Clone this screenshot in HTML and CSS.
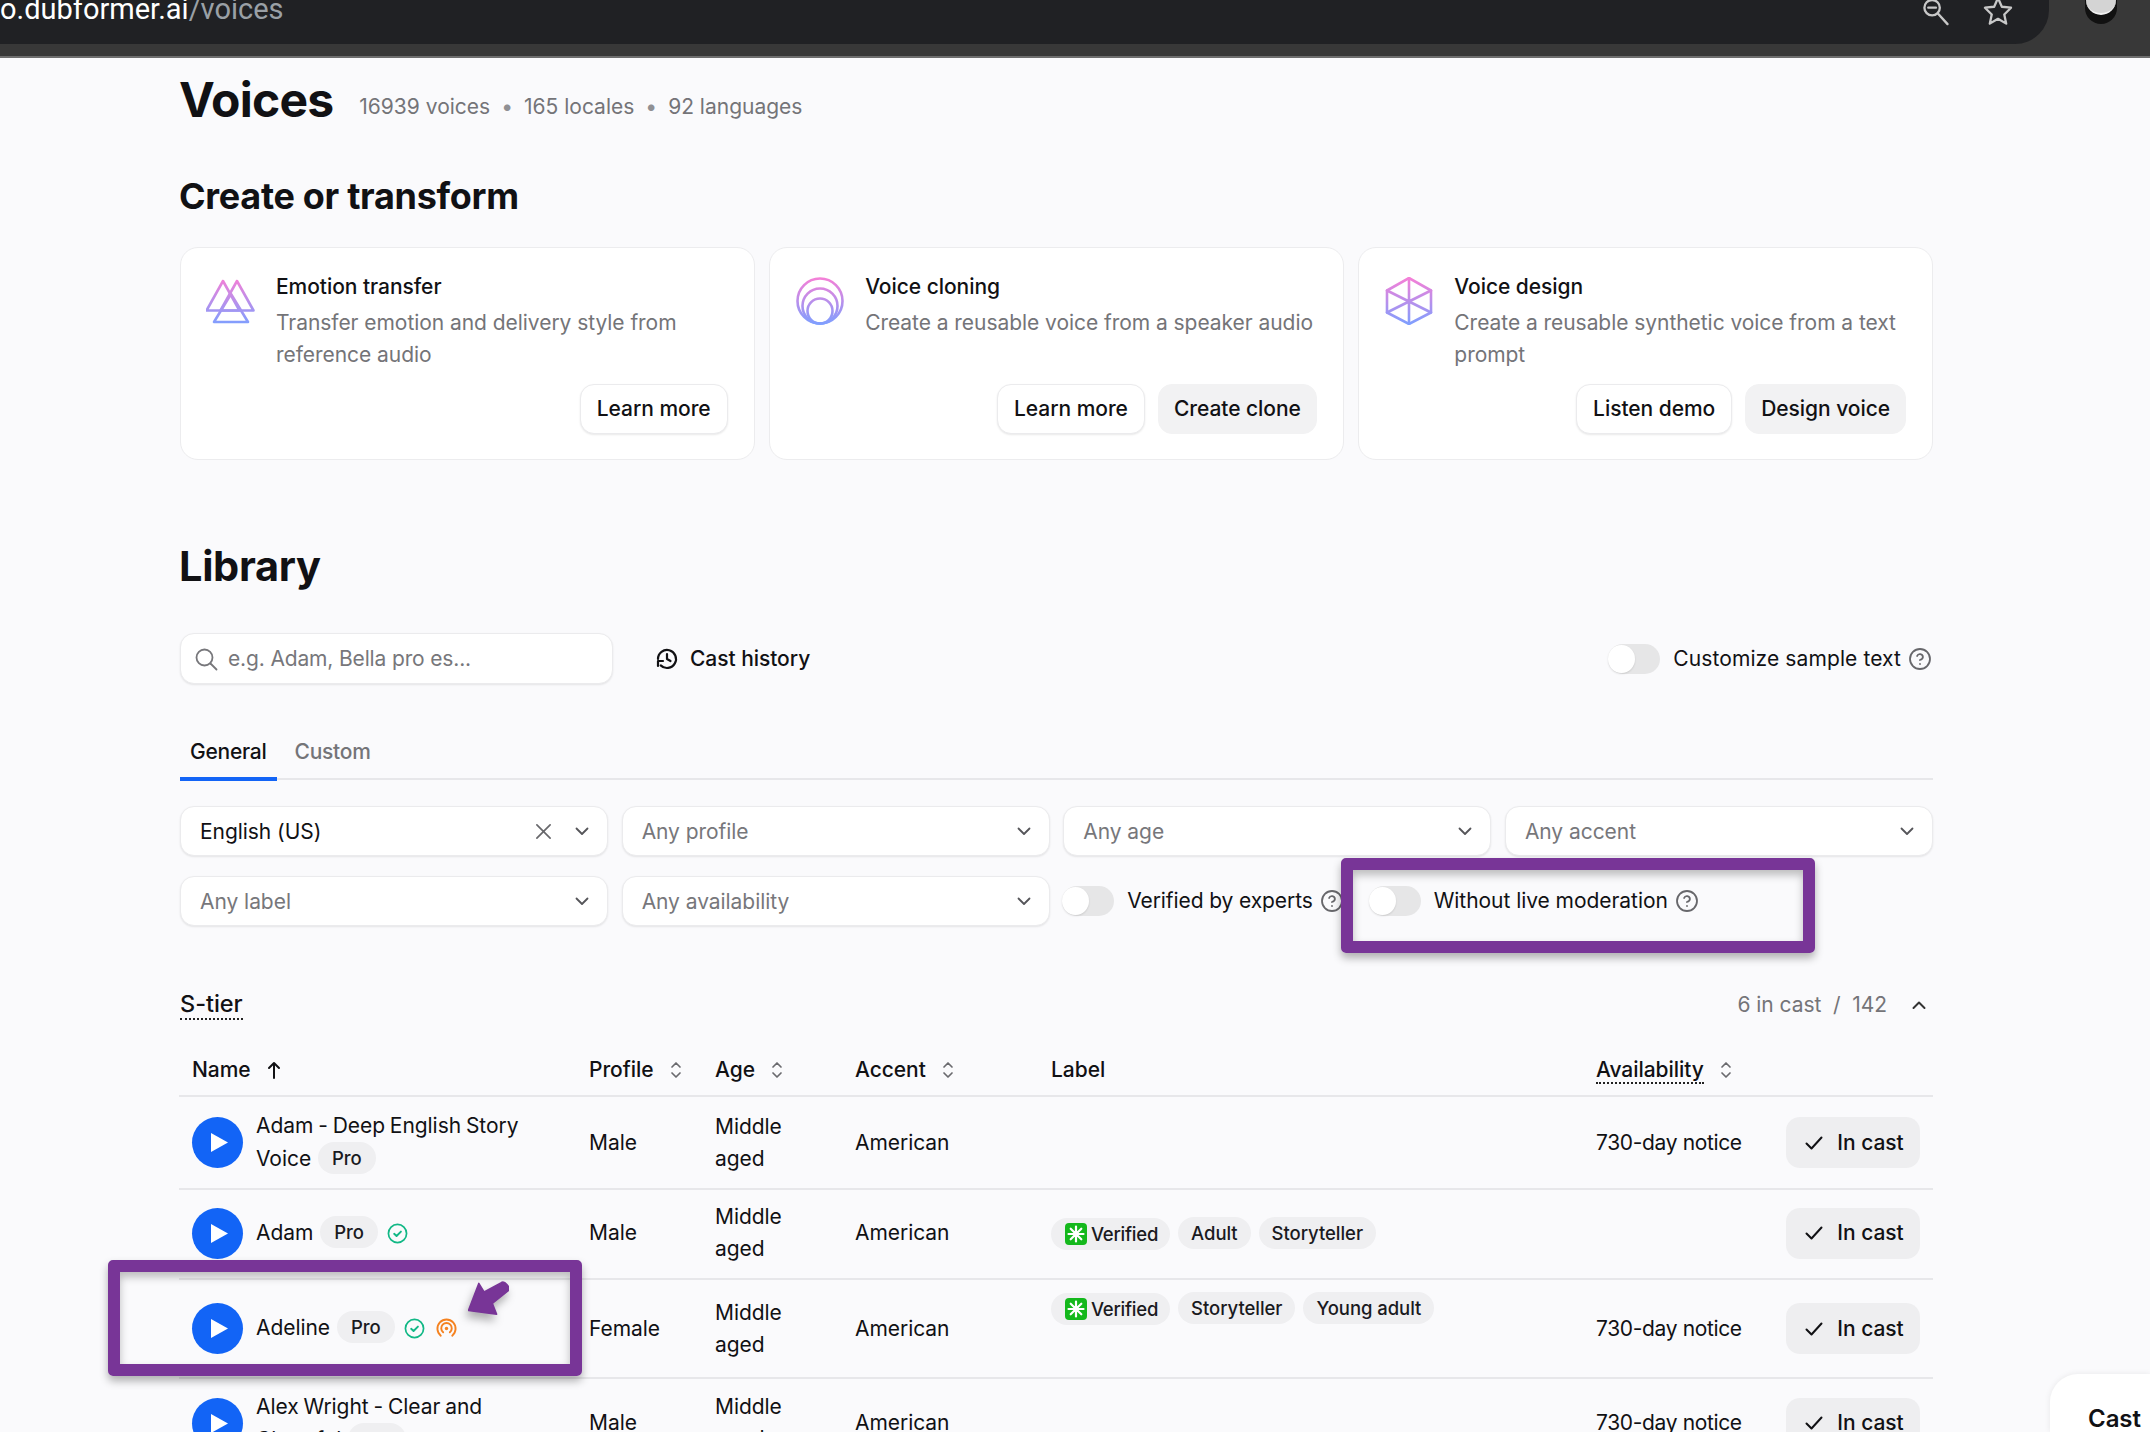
FILE: index.html
```html
<!DOCTYPE html>
<html lang="en">
<head>
<meta charset="utf-8">
<title>Voices</title>
<link rel="stylesheet" href="styles.css">
</head>
<body>
<svg class="defs" width="0" height="0" aria-hidden="true">
  <defs>
    <linearGradient id="g1" gradientUnits="userSpaceOnUse" x1="0" y1="0" x2="0" y2="48">
      <stop offset="0" stop-color="#f77fd6"/><stop offset="1" stop-color="#7d9fff"/>
    </linearGradient>
    <symbol id="help" viewBox="0 0 24 24"><circle cx="12" cy="12" r="10"/><path d="M9.100 9a3 3 0 0 1 5.800 1c0 2-3 3-3 3"/><path d="M12 17h.01"/></symbol>
    <symbol id="chev" viewBox="0 0 16 16"><path d="M2.500 5.500 8 11l5.500-5.500"/></symbol>
    <symbol id="sort" viewBox="0 0 12 20"><path d="M2 7l4-4 4 4"/><path d="M2 13l4 4 4-4"/></symbol>
    <symbol id="check" viewBox="0 0 20 20"><path d="M2.500 10.500 7.500 15.500 17.500 4.500"/></symbol>
    <symbol id="ok" viewBox="0 0 22 22"><circle cx="11" cy="11" r="9.500"/><path class="ok-tick" d="M7.500 11.300 10 13.600 14.600 9"/></symbol>
    <symbol id="play" viewBox="0 0 51 51"><path d="M19 16v19l17-9.500z"/></symbol>
    <symbol id="star-tag" viewBox="0 0 22 22">
      <rect width="22" height="22" rx="4" fill="#14b81c"/>
      <path d="M11 3.500v15M3.500 11h15M5.700 5.700l10.600 10.600M16.300 5.700 5.700 16.300" stroke="#fff" stroke-width="2.200" fill="none"/>
    </symbol>
  </defs>
</svg>

<header class="chrome">
  <div class="omnibox">
    <div class="url"><span class="url-host">o.dubformer.ai</span><span class="url-path">/voices</span></div>
    <div class="omni-icons">
      <svg class="omni-icon" viewBox="0 0 28 28"><circle cx="11" cy="8" r="8"/><path d="M7 8h8M17 14l10 11"/></svg>
      <svg class="omni-icon" viewBox="0 0 30 28"><path d="M15 -2l4 9 9.500 1-7 7 2 9.500-8.500-5-8.500 5 2-9.500-7-7 9.500-1z"/></svg>
    </div>
  </div>
  <div class="avatar"><span class="avatar-head"></span></div>
</header>

<main class="page">
  <div class="title-row">
    <h1 class="title">Voices</h1>
    <p class="stats">16939 voices<span class="dot">•</span>165 locales<span class="dot">•</span>92 languages</p>
  </div>

  <h2 class="heading">Create or transform</h2>
  <section class="cards">
    <article class="card">
      <div class="card-top">
        <svg class="card-icon" viewBox="0 0 52 48"><g class="grad"><path d="M17 4 .5 33.500h33z"/><path d="M31 4 14.500 33.500h33z"/><path d="M25 17 8 45h34z"/></g></svg>
        <div class="card-body">
          <h3 class="card-title">Emotion transfer</h3>
          <p class="card-text">Transfer emotion and delivery style from reference audio</p>
        </div>
      </div>
      <div class="card-actions"><button class="btn">Learn more</button></div>
    </article>
    <article class="card">
      <div class="card-top">
        <svg class="card-icon" viewBox="0 0 52 48"><g class="grad"><circle cx="25" cy="24" r="22.500"/><circle cx="25" cy="29" r="17.500"/><circle cx="25" cy="34" r="12.500"/></g></svg>
        <div class="card-body">
          <h3 class="card-title">Voice cloning</h3>
          <p class="card-text">Create a reusable voice from a speaker audio</p>
        </div>
      </div>
      <div class="card-actions"><button class="btn">Learn more</button><button class="btn btn-soft">Create clone</button></div>
    </article>
    <article class="card">
      <div class="card-top">
        <svg class="card-icon" viewBox="0 0 52 48"><g class="grad"><path d="M25 1 47 13.500v22L25 47 3 35.500v-22z"/><path d="M25 1v46M3 13.500 47 35.500M47 13.500 3 35.500"/></g></svg>
        <div class="card-body">
          <h3 class="card-title">Voice design</h3>
          <p class="card-text">Create a reusable synthetic voice from a text prompt</p>
        </div>
      </div>
      <div class="card-actions"><button class="btn">Listen demo</button><button class="btn btn-soft">Design voice</button></div>
    </article>
  </section>

  <h2 class="heading heading-lg">Library</h2>
  <div class="toolbar">
    <div class="search">
      <svg class="i-search" viewBox="0 0 24 24"><circle cx="10.500" cy="10.500" r="8"/><path d="M16.500 16.500l6 6"/></svg>
      <span>e.g. Adam, Bella pro es...</span>
    </div>
    <button class="link-btn">
      <svg class="i-history" viewBox="0 0 24 24"><path d="M3 12a9 9 0 1 1 2.700 6.400"/><path d="M3 19v-5h5"/><path d="M12 7v5l3.500 2"/></svg>
      Cast history
    </button>
    <div class="spring"></div>
    <label class="toggle-row toggle-sample"><span class="toggle"></span>Customize sample text<svg class="i-help"><use href="#help"/></svg></label>
  </div>

  <nav class="tabs">
    <a class="tab tab-on">General</a>
    <a class="tab">Custom</a>
  </nav>

  <div class="filters">
    <div class="select sel-value"><span class="sel-text">English (US)</span>
      <svg class="i-x" viewBox="0 0 18 18"><path d="M2 2l14 14M16 2 2 16"/></svg>
      <svg class="i-chev"><use href="#chev"/></svg></div>
    <div class="select"><span class="sel-text">Any profile</span><svg class="i-chev"><use href="#chev"/></svg></div>
    <div class="select"><span class="sel-text">Any age</span><svg class="i-chev"><use href="#chev"/></svg></div>
    <div class="select"><span class="sel-text">Any accent</span><svg class="i-chev"><use href="#chev"/></svg></div>
    <div class="select"><span class="sel-text">Any label</span><svg class="i-chev"><use href="#chev"/></svg></div>
    <div class="select"><span class="sel-text">Any availability</span><svg class="i-chev"><use href="#chev"/></svg></div>
    <div class="toggles">
      <label class="toggle-row toggle-first"><span class="toggle"></span>Verified by experts<svg class="i-help"><use href="#help"/></svg></label>
      <label class="toggle-row toggle-second"><span class="toggle"></span>Without live moderation<svg class="i-help"><use href="#help"/></svg></label>
    </div>
  </div>

  <div class="tier-head">
    <span class="dotted tier-name">S-tier</span>
    <span class="tier-count">6 in cast &nbsp;/&nbsp; 142<svg class="i-up" viewBox="0 0 16 16"><path d="M2.500 11 8 5.500l5.500 5.500"/></svg></span>
  </div>

  <table class="voices">
    <colgroup>
      <col class="c-name"><col class="c-profile"><col class="c-age"><col class="c-accent"><col class="c-label"><col class="c-avail"><col class="c-act">
    </colgroup>
    <thead>
      <tr>
        <th>Name <svg class="i-arrow" viewBox="0 0 14 20"><path d="M7 18V3M2 8l5-5 5 5"/></svg></th>
        <th>Profile <svg class="i-sort"><use href="#sort"/></svg></th>
        <th>Age <svg class="i-sort"><use href="#sort"/></svg></th>
        <th>Accent <svg class="i-sort"><use href="#sort"/></svg></th>
        <th>Label</th>
        <th><span class="dotted">Availability</span> <svg class="i-sort"><use href="#sort"/></svg></th>
        <th></th>
      </tr>
    </thead>
    <tbody>
      <tr class="r1">
        <td><div class="who"><svg class="play"><use href="#play"/></svg><div class="who-text">Adam - Deep English Story Voice <span class="pill">Pro</span></div></div></td>
        <td>Male</td><td>Middle aged</td><td>American</td><td></td><td class="notice">730-day notice</td>
        <td><button class="cast"><svg class="i-check"><use href="#check"/></svg>In cast</button></td>
      </tr>
      <tr class="r2">
        <td><div class="who"><svg class="play"><use href="#play"/></svg><div class="who-text who-line">Adam <span class="pill">Pro</span><svg class="i-ok"><use href="#ok"/></svg></div></div></td>
        <td>Male</td><td>Middle aged</td><td>American</td>
        <td><div class="labels"><span class="tag tag-v"><svg class="i-tag"><use href="#star-tag"/></svg>Verified</span><span class="tag">Adult</span><span class="tag">Storyteller</span></div></td>
        <td></td>
        <td><button class="cast"><svg class="i-check"><use href="#check"/></svg>In cast</button></td>
      </tr>
      <tr class="r3">
        <td><div class="who"><svg class="play"><use href="#play"/></svg><div class="who-text who-line">Adeline <span class="pill">Pro</span><svg class="i-ok"><use href="#ok"/></svg><svg class="i-live" viewBox="0 0 22 22"><path d="M5 18.500a9.500 9.500 0 1 1 12 0"/><path d="M7.500 15a5.500 5.500 0 1 1 7 0"/><circle class="live-dot" cx="11" cy="11" r="1.800"/></svg></div></div></td>
        <td>Female</td><td>Middle aged</td><td>American</td>
        <td class="top"><div class="labels"><span class="tag tag-v"><svg class="i-tag"><use href="#star-tag"/></svg>Verified</span><span class="tag">Storyteller</span><span class="tag">Young adult</span></div></td>
        <td class="notice">730-day notice</td>
        <td><button class="cast"><svg class="i-check"><use href="#check"/></svg>In cast</button></td>
      </tr>
      <tr class="r4">
        <td><div class="who"><svg class="play"><use href="#play"/></svg><div class="who-text">Alex Wright - Clear and Cheerful <span class="pill">Pro</span></div></div></td>
        <td>Male</td><td>Middle aged</td><td>American</td><td></td><td class="notice">730-day notice</td>
        <td><button class="cast"><svg class="i-check"><use href="#check"/></svg>In cast</button></td>
      </tr>
    </tbody>
  </table>
</main>

<div class="mark mark-toggle"></div>
<div class="mark mark-row"></div>
<svg class="pointer" viewBox="1 2 38 31"><path d="M11 4 1.500 29l26 3.500-4-10L38 11c3-3-3-10-6.500-7.500L16 12z"/></svg>
<aside class="cast-panel">Cast</aside>
</body>
</html>
```
FILE: styles.css
```css
* { box-sizing: border-box; }
html, body { margin: 0; height: 1432px; overflow: hidden; }
body {
  position: relative;
  background: #fafafc;
  color: #111114;
  font: 400 21px/32px Inter, "Liberation Sans", sans-serif;
  letter-spacing: -0.05px;
}
.defs { position: absolute; }
button { font: inherit; color: inherit; letter-spacing: inherit; cursor: pointer; }
svg { fill: none; stroke: currentColor; stroke-linecap: round; stroke-linejoin: round; }

/* browser chrome */
.chrome {
  display: flex;
  height: 58px;
  background: #383838;
  border-bottom: 2px solid #6e6e6e;
}
.omnibox {
  display: flex;
  justify-content: space-between;
  width: 2049px;
  height: 44px;
  background: #202124;
  border-bottom-right-radius: 34px;
  overflow: hidden;
}
.url { font: 400 29px/32px Roboto, sans-serif; letter-spacing: 0; margin-top: -7px; white-space: nowrap; }
.url-host { color: #fff; }
.url-path { color: #9aa0a6; }
.omni-icons { display: flex; gap: 33px; padding-right: 36px; }
.omni-icon { width: 30px; height: 27px; color: #c8c8c8; stroke-width: 2.400; }
.avatar {
  width: 32px; height: 24px; margin-left: 36px;
  border-radius: 0 0 16px 16px;
  background: #111;
  overflow: hidden;
}
.avatar-head {
  display: block; width: 30px; height: 15px; margin: 0 auto;
  background: #d4d4d4; border-radius: 0 0 15px 15px;
  border-bottom: 2px solid #f2f2f2;
}

/* page */
.page { width: 1753px; margin-left: 180px; padding-top: 13px; }
.title-row { display: flex; align-items: flex-start; gap: 26px; }
.title { margin: 0 0 0 -1px; font-size: 48px; line-height: 58px; font-weight: 700; letter-spacing: -0.8px; }
.stats { margin: 20px 0 0; color: #747478; letter-spacing: 0; }
.dot { margin: 0 11px; color: #909094; }

.heading { margin: 44px 0 28px -1px; font-size: 36px; line-height: 46px; font-weight: 700; letter-spacing: -0.3px; }
.heading-lg { margin: 80px 0 41px -1px; font-size: 41.500px; line-height: 52px; }

.cards { display: grid; grid-template-columns: repeat(3, 1fr); gap: 14.500px; }
.card {
  display: flex; flex-direction: column;
  height: 213px;
  padding: 23px 26px 25px 25px;
  background: #fff;
  border: 1.500px solid #ececee;
  border-radius: 18px;
}
.card-top { display: flex; gap: 18px; }
.card-icon { flex: none; width: 52px; height: 48px; margin-top: 6px; }
.grad { stroke: url(#g1); stroke-width: 2.600; }
.card-title { margin: 0; font-size: 21px; line-height: 32px; font-weight: 500; }
.card-text { margin: 4px 0 0; color: #747478; }
.card-actions { display: flex; justify-content: flex-end; gap: 13px; margin-top: auto; }
.btn {
  height: 50px; padding: 0 16px;
  background: #fff;
  border: 1px solid #ebebed;
  border-radius: 14px;
  font-weight: 500;
  box-shadow: 0 1px 2px rgba(0, 0, 0, .09);
}
.btn-soft { padding: 0 15px; background: #f2f2f3; border-color: #f2f2f3; box-shadow: none; }

/* toolbar */
.toolbar { display: flex; align-items: center; height: 51px; padding-right: 1px; }
.search {
  display: flex; align-items: center; gap: 10px;
  width: 433px; height: 51px; padding-left: 13px;
  background: #fff; color: #77777b;
  border: 1px solid #ebebed; border-radius: 14px;
  box-shadow: 0 1px 2px rgba(0, 0, 0, .09);
  letter-spacing: -0.15px;
}
.i-search { width: 24px; height: 24px; stroke-width: 1.800; }
.link-btn {
  display: flex; align-items: center; gap: 11px;
  margin-left: 42px; padding: 0;
  background: none; border: 0; font-weight: 500;
}
.i-history { width: 24px; height: 24px; stroke-width: 2.200; }
.spring { flex: 1; }

.toggle-row { display: flex; align-items: center; white-space: nowrap; }
.toggle-sample { letter-spacing: 0.1px; }
.toggle {
  position: relative; flex: none;
  width: 52px; height: 30px; margin-right: 13px;
  background: #e6e6e7; border-radius: 15px;
}
.toggle::after {
  content: ""; position: absolute; left: 0; top: 1px;
  width: 27px; height: 28px;
  background: #fff; border-radius: 50%;
  box-shadow: 0 1px 2px rgba(0, 0, 0, .12);
}
.i-help { width: 24px; height: 24px; margin-left: 7px; color: #67676b; stroke-width: 1.800; }

.tabs { display: flex; margin-top: 44px; height: 52px; border-bottom: 2px solid #e7e7ea; }
.tab { height: 53px; padding: 8px 10px 0; color: #747478; font-weight: 500; margin-right: 8px; letter-spacing: -0.25px; }
.tab-on { color: #111114; border-bottom: 4px solid #1264f6; }

/* filters */
.filters {
  display: grid;
  grid-template-columns: repeat(4, 1fr);
  grid-auto-rows: 50px;
  gap: 20px 13.500px;
  margin-top: 26px;
}
.select {
  display: flex; align-items: center;
  padding: 2px 17px 0 19px;
  background: #fff; color: #77777b;
  border: 1px solid #ebebed; border-radius: 14px;
  box-shadow: 0 1px 2px rgba(0, 0, 0, .09);
}
.sel-text { flex: 1; }
.sel-value { color: #111114; }
.i-x { width: 17px; height: 17px; margin: -2px 22px 0 0; color: #67676b; stroke-width: 1.800; }
.i-chev { width: 16px; height: 16px; margin-top: -2px; color: #555559; stroke-width: 1.800; }
.toggles { grid-column: span 2; display: flex; align-items: center; margin-left: -1px; }
.toggle-first { letter-spacing: -0.1px; }
.toggle-second { margin-left: 25px; }

/* tier */
.dotted { border-bottom: 2px dotted #222; }
.tier-head { display: flex; justify-content: space-between; align-items: center; height: 32px; margin-top: 63px; }
.tier-name { font-size: 23.500px; font-weight: 500; line-height: 28px; }
.tier-count { display: flex; align-items: center; color: #747478; }
.i-up { width: 16px; height: 16px; margin: 0 6px 0 24px; color: #333; stroke-width: 2; }

/* table */
.voices { width: 1754px; margin: 23px 0 0 -1px; border-collapse: collapse; table-layout: fixed; }
.c-name { width: 397px; }
.c-profile { width: 126px; }
.c-age { width: 140px; }
.c-accent { width: 196px; }
.c-label { width: 545px; }
.c-avail { width: 190px; }
.c-act { width: 160px; }
th {
  height: 52px; padding: 0 13px;
  text-align: left; font-weight: 500; white-space: nowrap;
  border-bottom: 2px solid #e7e7ea;
}
td { padding: 0 13px; border-bottom: 2px solid #e7e7ea; }
td.top { vertical-align: top; padding-top: 12px; }
td.notice { letter-spacing: -0.35px; }
.r1 { height: 93px; }
.r2 { height: 90px; }
.r2 td { padding-bottom: 2px; }
.r3 { height: 99px; }
.r4 { height: 90px; }
.i-arrow { width: 14px; height: 20px; margin-left: 11px; vertical-align: -3px; stroke-width: 2; }
.i-sort { width: 12px; height: 20px; margin-left: 11px; vertical-align: -3px; color: #6a6a6e; stroke-width: 1.700; }

.who { display: flex; align-items: center; gap: 13px; }
.play { flex: none; width: 51px; height: 51px; background: #1264f6; border-radius: 50%; fill: #fff; stroke: none; }
.who-text { flex: 1; word-spacing: -1px; }
.who-line { margin-top: -2px; }
.pill, .tag {
  display: inline-flex; align-items: center;
  height: 32px;
  background: #efeff1;
  border-radius: 16px;
  font-size: 18.500px;
  font-weight: 500;
  color: #1a1a1e;
}
.pill { padding: 0 14px; margin-left: 2px; vertical-align: 1px; }
.i-ok { width: 21px; height: 21px; margin-left: 9px; vertical-align: -4px; color: #12b886; stroke-width: 1.800; }
.ok-tick { stroke-width: 2; }
.i-live { width: 21px; height: 21px; margin-left: 11px; vertical-align: -4px; color: #f58220; stroke-width: 2; }
.live-dot { fill: #f58220; stroke: none; }

.labels { display: flex; flex-wrap: wrap; gap: 8px; align-items: flex-start; }
.tag { padding: 0 13px; }
.tag-v { padding: 0 12px 0 14px; margin-top: 1px; letter-spacing: -0.25px; }
.i-tag { width: 22px; height: 22px; margin-right: 4px; stroke: none; }

.cast {
  display: flex; align-items: center; justify-content: center; gap: 13px;
  width: 134px; height: 51px; padding: 0 0 0 2px;
  background: #eeeef0; border: 0; border-radius: 14px;
  font-weight: 500;
}
.i-check { width: 20px; height: 20px; stroke-width: 2; }

/* annotations and overlays */
.mark {
  position: absolute;
  border: 12px solid #783597;
  border-radius: 5px;
  box-shadow: 0 5px 9px rgba(0, 0, 0, .3), inset 0 5px 9px rgba(0, 0, 0, .25);
}
.mark-toggle { left: 1341px; top: 858px; width: 474px; height: 95px; }
.mark-row { left: 108px; top: 1260px; width: 474px; height: 116px; }
.pointer {
  position: absolute; left: 468px; top: 1281px;
  width: 41px; height: 34px;
  fill: #783597; stroke: #783597; stroke-width: 1.500;
  filter: drop-shadow(-2px 6px 4px rgba(0, 0, 0, .3));
}
.cast-panel {
  position: absolute; left: 2050px; top: 1374px;
  width: 100px; height: 58px;
  padding: 29px 0 0 38px;
  background: #fff;
  border-top-left-radius: 28px;
  font-size: 24px; font-weight: 600;
  box-shadow: 0 0 6px rgba(0, 0, 0, .08);
}
```
